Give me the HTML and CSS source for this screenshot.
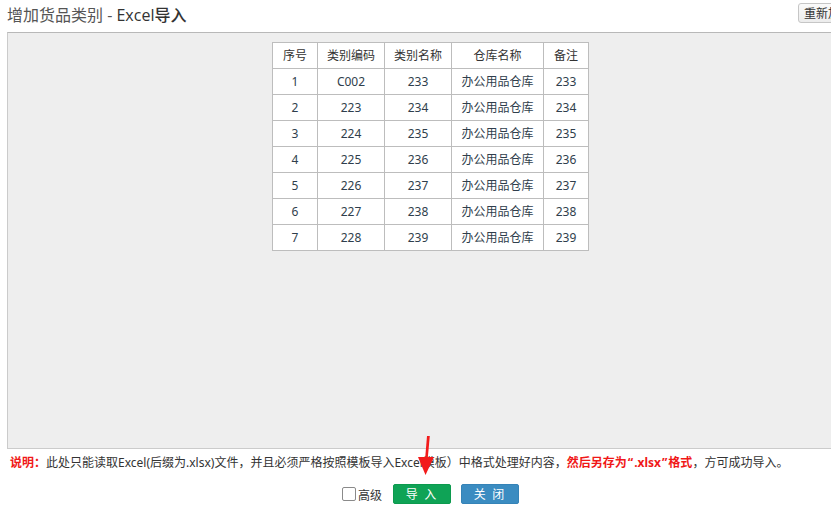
FILE: index.html
```html
<!DOCTYPE html>
<html lang="zh-CN">
<head>
<meta charset="utf-8">
<title>增加货品类别 - Excel导入</title>
<link rel="stylesheet" href="styles.css">
</head>
<body>
<div class="page">
  <div class="header">
    <h1 class="title">增加货品类别 - <span class="title-strong">Excel导入</span></h1>
    <button class="reload" type="button">重新加载</button>
  </div>
  <div class="panel">
    <table class="grid">
      <colgroup>
        <col class="c1"><col class="c2"><col class="c3"><col class="c4"><col class="c5">
      </colgroup>
      <thead>
        <tr><th>序号</th><th>类别编码</th><th>类别名称</th><th>仓库名称</th><th>备注</th></tr>
      </thead>
      <tbody>
        <tr><td>1</td><td>C002</td><td>233</td><td>办公用品仓库</td><td>233</td></tr>
        <tr><td>2</td><td>223</td><td>234</td><td>办公用品仓库</td><td>234</td></tr>
        <tr><td>3</td><td>224</td><td>235</td><td>办公用品仓库</td><td>235</td></tr>
        <tr><td>4</td><td>225</td><td>236</td><td>办公用品仓库</td><td>236</td></tr>
        <tr><td>5</td><td>226</td><td>237</td><td>办公用品仓库</td><td>237</td></tr>
        <tr><td>6</td><td>227</td><td>238</td><td>办公用品仓库</td><td>238</td></tr>
        <tr><td>7</td><td>228</td><td>239</td><td>办公用品仓库</td><td>239</td></tr>
      </tbody>
    </table>
  </div>
  <p class="note"><span class="note-label">说明：</span>此处只能读取Excel(后缀为.xlsx)文件，并且必须严格按照模板导入Excel模板）中格式处理好内容，<span class="note-warn">然后另存为<span class="q">“</span>.xlsx<span class="q">”</span>格式</span>，方可成功导入。</p>
  <div class="actions">
    <label class="adv"><span class="box"></span>高级</label>
    <button class="btn btn-green" type="button">导 入</button>
    <button class="btn btn-blue" type="button">关 闭</button>
  </div>
  <svg class="arrow" width="30" height="50" viewBox="0 0 30 50">
    <path d="M13 3 L15.8 3 L13.6 27 L11 27 Z" fill="#f21b1b"/>
    <path d="M4 24 L20 24 L11.5 42 Z" fill="#f21b1b"/>
  </svg>
</div>
</body>
</html>
```
FILE: styles.css
```css
html, body {
  margin: 0;
  padding: 0;
  background: #ffffff;
  overflow: hidden;
}
body {
  font-family: "Noto Sans", "Noto Sans CJK SC", sans-serif;
  color: #333;
}
.page {
  position: relative;
  width: 858px;
  height: 522px;
}
.header {
  display: flex;
  align-items: flex-start;
  justify-content: space-between;
  height: 32px;
  padding-left: 7px;
}
.title {
  margin: 0;
  padding-top: 5px;
  font-size: 16px;
  line-height: 20px;
  font-weight: normal;
  color: #555;
  font-family: "Open Sans", "Noto Sans CJK SC", sans-serif;
}
.title-strong {
  color: #333;
  font-weight: 500;
}
.reload {
  margin-top: 3px;
  height: 20px;
  padding: 0 5px;
  font-size: 12px;
  line-height: 18px;
  font-family: "Noto Sans CJK SC", sans-serif;
  color: #333;
  background: linear-gradient(#fafafa, #ececec);
  border: 1px solid #c6c6c6;
  border-radius: 3px;
  white-space: nowrap;
}
.panel {
  margin: 0 4px 0 7px;
  height: 406px;
  background: #eeeeee;
  border: 1px solid #cbcbcb;
  border-top-color: #b8b8b8;
  padding-top: 9px;
  box-sizing: content-box;
}
.grid {
  margin: 0 auto;
  border-collapse: collapse;
  table-layout: fixed;
  width: 316px;
  background: #fff;
  font-size: 12px;
  color: #333;
  font-family: "Noto Sans", "Noto Sans CJK SC", sans-serif;
}
.c1 { width: 45px; }
.c2 { width: 67px; }
.c3 { width: 67px; }
.c4 { width: 92px; }
.c5 { width: 45px; }
.grid th, .grid td {
  border: 1px solid #bdbdbd;
  height: 25px;
  padding: 0;
  text-align: center;
  font-weight: normal;
  line-height: 16px;
}
.grid td {
  color: #2f3e4c;
}
.note {
  margin: 4px 0 0 0;
  padding-left: 10px;
  font-size: 12px;
  line-height: 20px;
  color: #333;
  white-space: nowrap;
  font-family: "Noto Sans", "Noto Sans CJK SC", sans-serif;
}
.note-label, .note-warn {
  color: #f01818;
  font-weight: bold;
}
.q {
  padding: 0 1px;
}
.actions {
  margin: 11px 4px 0 7px;
  display: flex;
  justify-content: center;
  align-items: center;
  height: 20px;
  font-size: 12px;
  font-family: "Noto Sans CJK SC", sans-serif;
}
.adv {
  display: flex;
  align-items: center;
  gap: 2px;
  color: #333;
  margin-right: 11px;
}
.box {
  width: 12px;
  height: 12px;
  border: 1px solid #8a8a8a;
  border-radius: 2px;
  background: #fff;
}
.btn {
  width: 58px;
  height: 20px;
  padding: 0;
  border-radius: 2px;
  color: #fff;
  font-size: 12px;
  line-height: 18px;
  font-family: "Noto Sans CJK SC", sans-serif;
  letter-spacing: 2px;
}
.btn-green {
  background: #0fa356;
  border: 1px solid #0c9a4e;
}
.btn-blue {
  background: #3b8cc1;
  border: 1px solid #3583b7;
  margin-left: 10px;
}
.arrow {
  position: absolute;
  left: 414px;
  top: 433px;
}
```
